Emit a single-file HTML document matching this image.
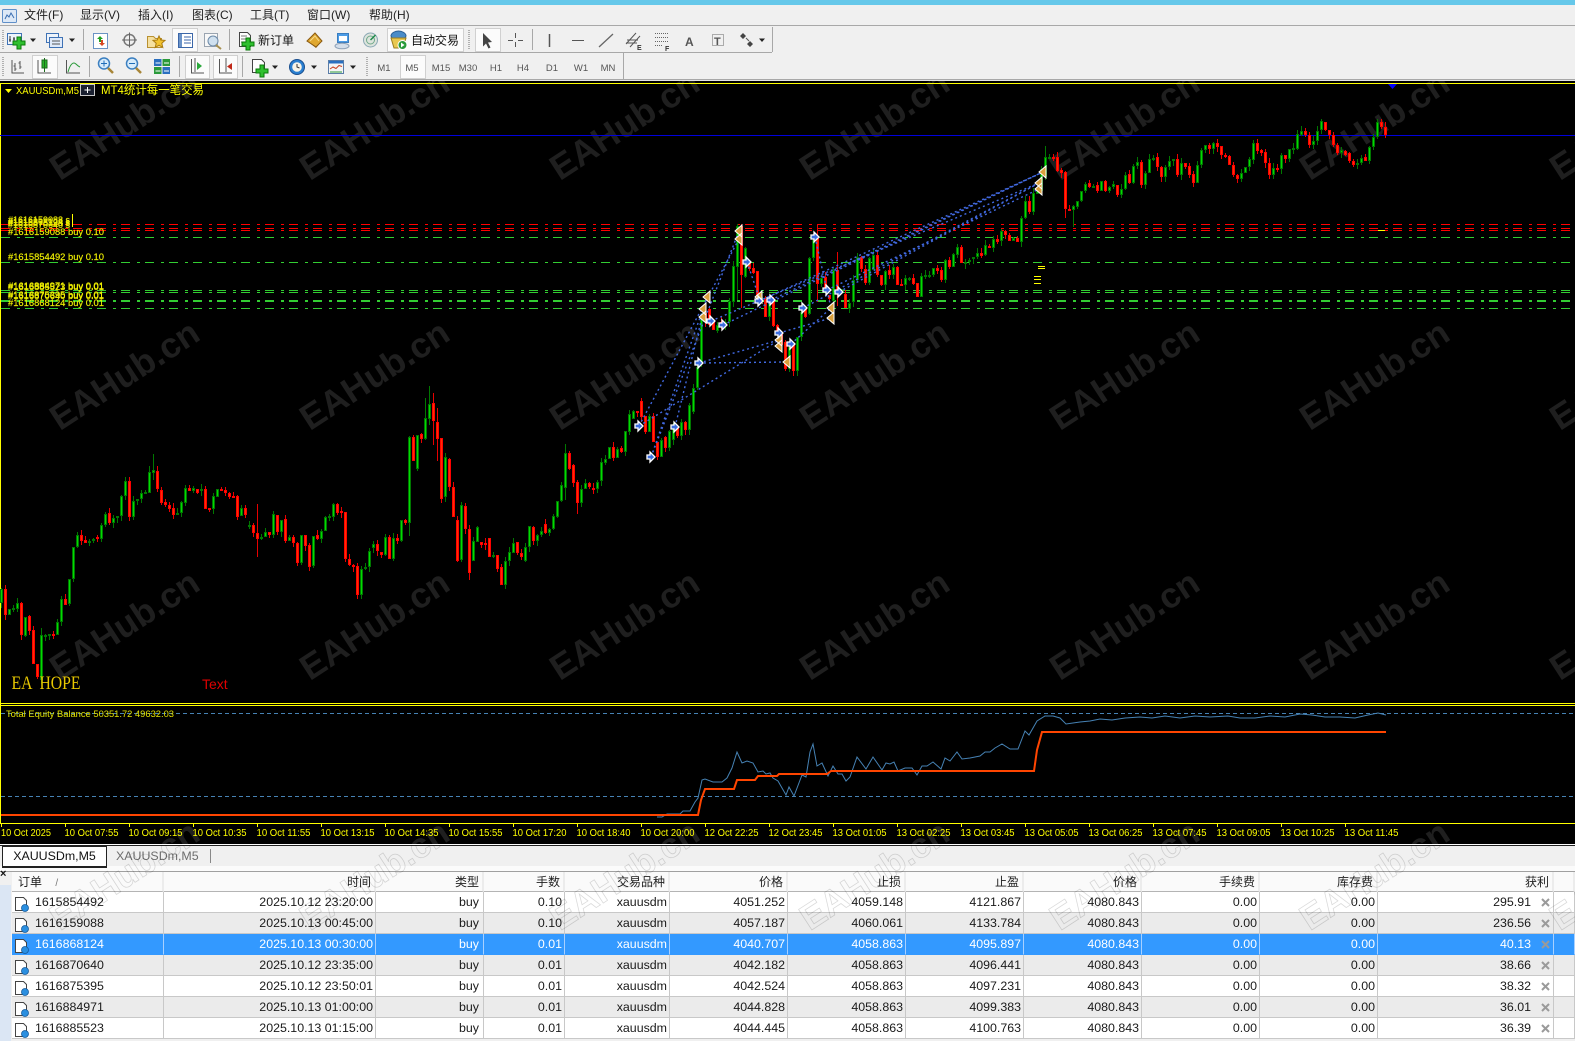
<!DOCTYPE html>
<html lang="zh"><head><meta charset="utf-8"><title>MT4</title>
<style>
html,body{margin:0;padding:0;width:1575px;height:1041px;overflow:hidden;background:#f0f0f0;font-family:"Liberation Sans","Noto Sans CJK SC",sans-serif}
svg{position:absolute;left:0;top:0;display:block}
.m{position:absolute;top:7px;font-size:12px;line-height:16px;color:#222;white-space:nowrap}
.tf{font:9.5px "Liberation Sans",sans-serif;fill:#555;text-anchor:middle}
.w{font:bold 35.5px "Liberation Sans",sans-serif;fill:#1f1f1f;text-anchor:middle}
.w2{font:bold 35.5px "Liberation Sans",sans-serif;fill:none;stroke:#000;stroke-opacity:.15;stroke-width:.8;text-anchor:middle}
.ax{font:10px "Liberation Sans",sans-serif;fill:#ffff00}
.ol{font:9.5px "Liberation Sans",sans-serif;fill:#f0f000;stroke:#f0f000;stroke-width:.15}
table{position:absolute;left:12px;top:872px;width:1563px;table-layout:fixed;border-collapse:separate;border-spacing:0;font-size:12.4px;color:#1a1a1a}
th{height:20px;box-sizing:border-box;background:#fafafa;font-weight:normal;font-size:12px;text-align:right;padding:0 3px;border-right:2px solid #ececec;border-bottom:1px solid #b4b4b4;white-space:nowrap;overflow:hidden;color:#222}
td{height:21px;box-sizing:border-box;background:#fff;text-align:right;padding:1px 2px 0;border-right:1px solid #c8c8c8;border-bottom:1px solid #c8c8c8;white-space:nowrap;overflow:hidden;line-height:19px}
tr.a td{background:#ebebeb}
tr.s td{background:#3399ff;color:#fff;border-right-color:#a8d0ff;border-bottom-color:#3399ff}
td:first-child{text-align:left;padding-left:23px}
td:nth-child(3){padding-right:4px}
td:nth-child(12){padding-right:22px}
</style></head><body>

<svg width="1575" height="845" viewBox="0 0 1575 845">
<rect x="0" y="81" width="1575" height="763" fill="#000"/>
<g>
<text class="w" transform="translate(131 135) rotate(-33)">EAHub.cn</text><text class="w" transform="translate(381 135) rotate(-33)">EAHub.cn</text><text class="w" transform="translate(631 135) rotate(-33)">EAHub.cn</text><text class="w" transform="translate(881 135) rotate(-33)">EAHub.cn</text><text class="w" transform="translate(1131 135) rotate(-33)">EAHub.cn</text><text class="w" transform="translate(1381 135) rotate(-33)">EAHub.cn</text><text class="w" transform="translate(1631 135) rotate(-33)">EAHub.cn</text>
<text class="w" transform="translate(131 385) rotate(-33)">EAHub.cn</text><text class="w" transform="translate(381 385) rotate(-33)">EAHub.cn</text><text class="w" transform="translate(631 385) rotate(-33)">EAHub.cn</text><text class="w" transform="translate(881 385) rotate(-33)">EAHub.cn</text><text class="w" transform="translate(1131 385) rotate(-33)">EAHub.cn</text><text class="w" transform="translate(1381 385) rotate(-33)">EAHub.cn</text><text class="w" transform="translate(1631 385) rotate(-33)">EAHub.cn</text>
<text class="w" transform="translate(131 635) rotate(-33)">EAHub.cn</text><text class="w" transform="translate(381 635) rotate(-33)">EAHub.cn</text><text class="w" transform="translate(631 635) rotate(-33)">EAHub.cn</text><text class="w" transform="translate(881 635) rotate(-33)">EAHub.cn</text><text class="w" transform="translate(1131 635) rotate(-33)">EAHub.cn</text><text class="w" transform="translate(1381 635) rotate(-33)">EAHub.cn</text><text class="w" transform="translate(1631 635) rotate(-33)">EAHub.cn</text>
<text class="w" transform="translate(131 885) rotate(-33)">EAHub.cn</text><text class="w" transform="translate(381 885) rotate(-33)">EAHub.cn</text><text class="w" transform="translate(631 885) rotate(-33)">EAHub.cn</text><text class="w" transform="translate(881 885) rotate(-33)">EAHub.cn</text><text class="w" transform="translate(1131 885) rotate(-33)">EAHub.cn</text><text class="w" transform="translate(1381 885) rotate(-33)">EAHub.cn</text><text class="w" transform="translate(1631 885) rotate(-33)">EAHub.cn</text>
</g>
<g shape-rendering="crispEdges">
<rect x="0" y="83" width="1575" height="1" fill="#ffff00"/>
<rect x="0" y="83" width="1" height="741" fill="#ffff00"/>
<rect x="0" y="703" width="1575" height="1" fill="#ffff00"/>
<rect x="0" y="705" width="1575" height="1" fill="#ffff00"/>
<rect x="0" y="823" width="1575" height="1" fill="#ffff00"/>
<rect x="0" y="135" width="1575" height="1" fill="#0000dc"/>
<g stroke="#ff0000" stroke-width="1" stroke-dasharray="9 7 3 5" fill="none">
<path d="M1 224.500H1575M1 228.500H1575M1 230.500H1575"/>
</g>
<g stroke="#32cd32" stroke-width="1" stroke-dasharray="9 7 3 5" fill="none">
<path d="M1 237.500H1575M1 262.500H1575M1 290.500H1575M1 292.500H1575M1 308.500H1575"/>
<path d="M1 301H1575" stroke-width="2"/>
</g>
<g fill="#ffff00">
<rect x="1378" y="230" width="7" height="1"/>
<rect x="1038" y="266" width="7" height="1"/><rect x="1038" y="268" width="7" height="1"/>
<rect x="1034" y="276" width="7" height="1"/><rect x="1034" y="279" width="7" height="1"/><rect x="1034" y="283" width="7" height="1"/>
<rect x="72" y="214" width="1" height="13"/>
</g>
<path id="gw" fill="#007800"/><path id="rw" fill="#e80000"/>
<path id="go" fill="#007800"/><path id="gi" fill="#00dc00"/>
<path id="ro" fill="#ff0000"/><path id="ri" fill="#ff3000"/>
</g>
<path d="M1388 84h9l-4.500 5z" fill="#0000ff"/>
<g stroke="#4169e1" stroke-width="1.400" stroke-dasharray="2 3" fill="none">
<path d="M639 426L739 239M651 457L739 231M675 427L707 297M651 457L703 309M639 426L779 340"/>
<path d="M699 363L787 362M699 363L779 340M747 262L759 297M815 237L831 308"/>
<path d="M711 321L1039 183M723 325L1043 172M771 300L1043 172M759 301L1043 172M803 308L1039 183M827 290L1039 189M839 292L1039 183M791 344L831 308M779 333L831 318"/>
</g>
<g fill="#daa03c" stroke="#fff" stroke-width="1">
<path d="M710 291v12l-7-6zM706 303v12l-7-6zM706 311v12l-7-6zM742 225v12l-7-6zM742 233v12l-7-6zM762 291v12l-7-6zM782 334v12l-7-6zM782 340v12l-7-6zM790 356v12l-7-6zM834 302v12l-7-6zM834 312v12l-7-6zM1046 166v12l-7-6zM1042 177v12l-7-6zM1042 183v12l-7-6z"/>
</g>
<g fill="#3c6ee0" stroke="#fff" stroke-width="1.300">
<path d="M695 361h3v-3l5 5-5 5v-3h-3zM707 319h3v-3l5 5-5 5v-3h-3zM719 323h3v-3l5 5-5 5v-3h-3zM743 260h3v-3l5 5-5 5v-3h-3zM755 299h3v-3l5 5-5 5v-3h-3zM767 298h3v-3l5 5-5 5v-3h-3zM775 331h3v-3l5 5-5 5v-3h-3zM787 342h3v-3l5 5-5 5v-3h-3zM799 306h3v-3l5 5-5 5v-3h-3zM811 235h3v-3l5 5-5 5v-3h-3zM823 288h3v-3l5 5-5 5v-3h-3zM835 290h3v-3l5 5-5 5v-3h-3zM635 424h3v-3l5 5-5 5v-3h-3zM647 455h3v-3l5 5-5 5v-3h-3zM671 425h3v-3l5 5-5 5v-3h-3z"/>
</g>
<!-- chart header -->
<path d="M5 89h7l-3.500 4z" fill="#ffff00"/>
<text x="16" y="94" font-family="Liberation Sans" font-size="10" fill="#ffff00" textLength="63" lengthAdjust="spacingAndGlyphs">XAUUSDm,M5</text>
<rect x="80.500" y="84.500" width="14" height="11" fill="#1a2030" stroke="#c8c8c8"/>
<path d="M87.500 87v6M84.500 90h6" stroke="#fff" stroke-width="1"/>
<text x="101" y="94" font-family="'Liberation Sans','Noto Sans CJK SC',sans-serif" font-size="12" fill="#ffff00" textLength="103" lengthAdjust="spacingAndGlyphs">MT4统计每一笔交易</text>
<!-- order labels -->
<text class="ol" x="8" y="223" textLength="62" lengthAdjust="spacingAndGlyphs">#1616159088 s</text>
<text class="ol" x="8" y="225" textLength="62" lengthAdjust="spacingAndGlyphs">#1616868124 s</text>
<text class="ol" x="8" y="226" textLength="62" lengthAdjust="spacingAndGlyphs">#1616875395 s</text>
<text class="ol" x="8" y="228" textLength="62" lengthAdjust="spacingAndGlyphs">#1616870640 s</text>
<text class="ol" x="8" y="235" textLength="96" lengthAdjust="spacingAndGlyphs">#1616159088 buy 0.10</text>
<text class="ol" x="8" y="260" textLength="96" lengthAdjust="spacingAndGlyphs">#1615854492 buy 0.10</text>
<text class="ol" x="8" y="289" textLength="96" lengthAdjust="spacingAndGlyphs">#1616884971 buy 0.01</text>
<text class="ol" x="8" y="290" textLength="96" lengthAdjust="spacingAndGlyphs">#1616885523 buy 0.01</text>
<text class="ol" x="8" y="298" textLength="96" lengthAdjust="spacingAndGlyphs">#1616875395 buy 0.01</text>
<text class="ol" x="8" y="299" textLength="96" lengthAdjust="spacingAndGlyphs">#1616870640 buy 0.01</text>
<text class="ol" x="8" y="306" textLength="96" lengthAdjust="spacingAndGlyphs">#1616868124 buy 0.01</text>
<text x="11.500" y="689" font-family="'Liberation Serif',serif" font-size="19" fill="#e8c800" textLength="69" lengthAdjust="spacingAndGlyphs" xml:space="preserve">EA  HOPE</text>
<text x="202" y="689" font-family="Liberation Sans" font-size="14" fill="#e00000">Text</text>
<!-- sub window -->
<g stroke="#4682b4" stroke-width="1" stroke-dasharray="4 3" fill="none" shape-rendering="crispEdges"><path d="M1 713.500H1575M1 796.500H1575"/></g>
<text x="6" y="717" font-family="Liberation Sans" font-size="9.500" fill="#e0e000" textLength="168" lengthAdjust="spacingAndGlyphs">Total Equity Balance 50351.72 49632.03</text>
<polyline fill="none" stroke="#4682b4" stroke-width="1" points="657,817 662,817 667,814 680,814 683,811 690,811 695,802 698,798 702,780 705,779 713,782 722,782 727,778 732,768 737,752 742,763 747,761 753,763 758,772 763,771 766,774 770,773 773,778 778,781 786,795 789,787 794,796 802,775 806,777 810,752 813,744 817,766 822,763 828,776 833,766 838,774 842,774 846,781 850,777 857,757 866,769 873,757 882,770 886,763 890,764 894,762 898,771 905,768 912,768 917,775 922,766 927,766 933,762 941,769 945,758 950,761 957,752 962,759 970,758 980,756 985,752 990,752 995,748 1002,744 1010,749 1018,749 1025,731 1029,735 1037,721 1045,716 1053,716 1060,718 1066,724 1080,722 1090,721 1100,719 1112,720 1125,718 1140,717 1152,718 1165,716 1180,718 1195,716 1210,717 1228,716 1240,718 1255,718 1270,716 1285,717 1300,714 1312,715 1325,717 1340,717 1355,718 1368,715 1378,713 1386,715"/>
<polyline fill="none" stroke="#ff4500" stroke-width="2" points="1,815 698,815 701,800 705,789 734,789 737,780 755,780 758,776 777,776 779,774 827,774 831,771 1034,771 1037,750 1042,732 1386,732"/>
<!-- axis -->
<g fill="#ffff00" shape-rendering="crispEdges">
<rect x="1" y="824" width="1" height="3"/><rect x="65" y="824" width="1" height="3"/><rect x="129" y="824" width="1" height="3"/><rect x="193" y="824" width="1" height="3"/><rect x="257" y="824" width="1" height="3"/><rect x="321" y="824" width="1" height="3"/><rect x="385" y="824" width="1" height="3"/><rect x="449" y="824" width="1" height="3"/><rect x="513" y="824" width="1" height="3"/><rect x="577" y="824" width="1" height="3"/><rect x="641" y="824" width="1" height="3"/><rect x="705" y="824" width="1" height="3"/><rect x="769" y="824" width="1" height="3"/><rect x="833" y="824" width="1" height="3"/><rect x="897" y="824" width="1" height="3"/><rect x="961" y="824" width="1" height="3"/><rect x="1025" y="824" width="1" height="3"/><rect x="1089" y="824" width="1" height="3"/><rect x="1153" y="824" width="1" height="3"/><rect x="1217" y="824" width="1" height="3"/><rect x="1281" y="824" width="1" height="3"/><rect x="1345" y="824" width="1" height="3"/>
</g>
<text class="ax" x="1" y="836" textLength="50" lengthAdjust="spacingAndGlyphs">10 Oct 2025</text>
<text class="ax" x="64.500" y="836" textLength="54" lengthAdjust="spacingAndGlyphs">10 Oct 07:55</text>
<text class="ax" x="128.500" y="836" textLength="54" lengthAdjust="spacingAndGlyphs">10 Oct 09:15</text>
<text class="ax" x="192.500" y="836" textLength="54" lengthAdjust="spacingAndGlyphs">10 Oct 10:35</text>
<text class="ax" x="256.500" y="836" textLength="54" lengthAdjust="spacingAndGlyphs">10 Oct 11:55</text>
<text class="ax" x="320.500" y="836" textLength="54" lengthAdjust="spacingAndGlyphs">10 Oct 13:15</text>
<text class="ax" x="384.500" y="836" textLength="54" lengthAdjust="spacingAndGlyphs">10 Oct 14:35</text>
<text class="ax" x="448.500" y="836" textLength="54" lengthAdjust="spacingAndGlyphs">10 Oct 15:55</text>
<text class="ax" x="512.500" y="836" textLength="54" lengthAdjust="spacingAndGlyphs">10 Oct 17:20</text>
<text class="ax" x="576.500" y="836" textLength="54" lengthAdjust="spacingAndGlyphs">10 Oct 18:40</text>
<text class="ax" x="640.500" y="836" textLength="54" lengthAdjust="spacingAndGlyphs">10 Oct 20:00</text>
<text class="ax" x="704.500" y="836" textLength="54" lengthAdjust="spacingAndGlyphs">12 Oct 22:25</text>
<text class="ax" x="768.500" y="836" textLength="54" lengthAdjust="spacingAndGlyphs">12 Oct 23:45</text>
<text class="ax" x="832.500" y="836" textLength="54" lengthAdjust="spacingAndGlyphs">13 Oct 01:05</text>
<text class="ax" x="896.500" y="836" textLength="54" lengthAdjust="spacingAndGlyphs">13 Oct 02:25</text>
<text class="ax" x="960.500" y="836" textLength="54" lengthAdjust="spacingAndGlyphs">13 Oct 03:45</text>
<text class="ax" x="1024.500" y="836" textLength="54" lengthAdjust="spacingAndGlyphs">13 Oct 05:05</text>
<text class="ax" x="1088.500" y="836" textLength="54" lengthAdjust="spacingAndGlyphs">13 Oct 06:25</text>
<text class="ax" x="1152.500" y="836" textLength="54" lengthAdjust="spacingAndGlyphs">13 Oct 07:45</text>
<text class="ax" x="1216.500" y="836" textLength="54" lengthAdjust="spacingAndGlyphs">13 Oct 09:05</text>
<text class="ax" x="1280.500" y="836" textLength="54" lengthAdjust="spacingAndGlyphs">13 Oct 10:25</text>
<text class="ax" x="1344.500" y="836" textLength="54" lengthAdjust="spacingAndGlyphs">13 Oct 11:45</text>
</svg>

<!-- toolbars -->
<div style="position:absolute;left:0;top:0;width:1575px;height:81px;background:#f0f0f0"></div>
<div style="position:absolute;left:0;top:0;width:1575px;height:5px;background:#66c8ea"></div>
<svg width="1575" height="81" viewBox="0 0 1575 81" style="z-index:2">
<defs>
<g id="pl"><path d="M-2-6h4v4h4v4h-4v4h-4v-4h-4v-4h4z" fill="#2fc02f" stroke="#0a7a0a" stroke-width="1"/></g>
<g id="dd"><path d="M-3-1.500h6l-3 3.500z" fill="#222"/></g>
</defs>
<g shape-rendering="crispEdges" fill="#a8a8a8">
<rect x="0" y="25" width="1575" height="1"/>
<rect x="0" y="52" width="772" height="1"/>
<rect x="772" y="27" width="1" height="25"/>
<rect x="623" y="53" width="1" height="26"/>
<rect x="0" y="79" width="1575" height="1"/>
<rect x="0" y="80" width="1575" height="1" fill="#e4e4e4"/>
<rect x="83" y="29" width="1" height="21"/><rect x="229" y="29" width="1" height="21"/><rect x="532" y="29" width="1" height="21"/>
<rect x="89" y="56" width="1" height="21"/><rect x="179" y="56" width="1" height="21"/><rect x="242" y="56" width="1" height="21"/>
</g>
<!-- grips -->
<g stroke="#b0b0b0" stroke-width="2" stroke-dasharray="1 1" fill="none"><path d="M3 30V50M3 57V77M469 30V50M367 57V77"/></g>
<!-- app icon -->
<rect x="2.500" y="9.500" width="14" height="13" rx="1" fill="#dce8f6" stroke="#5f8fc8"/><path d="M5 19l2-4 2 2 2-4 3 5" fill="none" stroke="#3a6db0"/>
<!-- pressed buttons -->
<g fill="#fbfbfb" stroke="#d0d0d0" shape-rendering="crispEdges">
<rect x="172.500" y="28.500" width="25" height="23"/>
<rect x="387.500" y="28.500" width="76" height="23"/>
<rect x="475.500" y="28.500" width="25" height="23"/>
<rect x="32.500" y="55.500" width="25" height="23"/>
<rect x="185.500" y="55.500" width="24" height="23"/>
<rect x="213.500" y="55.500" width="24" height="23"/>
<rect x="400.500" y="55.500" width="25" height="23"/>
</g>
<!-- new chart -->
<rect x="7.500" y="33.500" width="14" height="11" fill="#eef4fb" stroke="#3f72b5"/><path d="M10 36v6M9 40h2M14 37v5M13 39h2" stroke="#333" fill="none"/><use href="#pl" x="19" y="43"/><use href="#dd" x="33" y="40"/>
<!-- profiles -->
<rect x="46.500" y="33.500" width="12" height="9" fill="#eef4fb" stroke="#3f72b5"/><rect x="49.500" y="37.500" width="13" height="10" fill="#dfeafa" stroke="#3f72b5"/><path d="M52 41h8M52 44h8" stroke="#555"/><use href="#dd" x="72" y="40"/>
<!-- market watch -->
<rect x="93.500" y="33.500" width="14" height="15" fill="#fff" stroke="#6b93c4"/><path d="M100 36l3 3h-2v3h-2v-3h-2z" fill="#1fa01f"/><path d="M102 46l-3-3h2v-3h2v3h2z" fill="#d84820"/>
<!-- crosshair -->
<circle cx="129.500" cy="40" r="5.500" fill="none" stroke="#777" stroke-width="1.500"/><path d="M129.500 32.500v15M122 40h15" stroke="#666" fill="none"/>
<!-- folder star -->
<path d="M147.500 36.500h6l2 2h6v9h-14z" fill="#f5e0a0" stroke="#b89030"/><path d="M159 36l1.800 4 4.200.400-3.200 2.900 1 4.200-3.800-2.300-3.800 2.300 1-4.200-3.200-2.900 4.200-.400z" fill="#f2c330" stroke="#a97b10"/>
<!-- navigator -->
<rect x="178.500" y="33.500" width="14" height="14" fill="#fff" stroke="#3b66a8"/><rect x="179" y="34" width="3" height="13" fill="#6b93c8"/><path d="M184 37h7M184 40h7M184 43h7" stroke="#3b66a8"/>
<!-- terminal greyed -->
<rect x="204.500" y="33.500" width="13" height="13" fill="#f8f8f8" stroke="#9aa4b0"/><circle cx="213" cy="41" r="5" fill="#cfe0ef" stroke="#6d8aa8"/><path d="M216 45l5 4" stroke="#a89050" stroke-width="2"/>
<!-- new order -->
<path d="M239.500 32.500h8l3 3v11h-11z" fill="#fff" stroke="#444"/><path d="M241 36h6M241 39h7M241 42h5" stroke="#777"/><use href="#pl" x="248" y="44"/>
<text x="258" y="44.500" font-family="'Liberation Sans','Noto Sans CJK SC',sans-serif" font-size="12" fill="#111">新订单</text>
<!-- book -->
<path d="M307 41l8-8 7 8-6 6z" fill="#e0a830" stroke="#8a5a10"/><path d="M307 41l9 7 6-7-6 6z" fill="#8a5a10"/><path d="M310 41l5-5 4 5" fill="none" stroke="#f6dc8c"/>
<!-- cloud/blue -->
<rect x="337.500" y="33.500" width="11" height="9" fill="#4c9ce6" stroke="#3a7dbf"/><rect x="339" y="36" width="8" height="5" fill="#fff"/><ellipse cx="342" cy="46" rx="7" ry="2.800" fill="#d4deea" stroke="#8fa2b8"/>
<!-- radar -->
<circle cx="370.500" cy="40" r="7" fill="#dde4dd" stroke="#8aa8b4"/><circle cx="370.500" cy="40" r="4" fill="none" stroke="#6fa88a"/><path d="M370.500 40l5-5" stroke="#1e8a4a" stroke-width="1.500"/>
<!-- auto trade -->
<path d="M391 36c0-3 4-5 7.500-5s7.500 2 7.500 5l-1 2H392z" fill="#4a8cc8" stroke="#2b5f95"/><path d="M391 38h15l-3 10h-9z" fill="#e8c850" stroke="#9a7d20"/><circle cx="402.500" cy="45" r="4.500" fill="#2a9a3a" stroke="#fff"/><path d="M401 42.500l3.500 2.500-3.500 2.500z" fill="#fff"/>
<text x="411" y="44.500" font-family="'Liberation Sans','Noto Sans CJK SC',sans-serif" font-size="12" fill="#111">自动交易</text>
<!-- cursor -->
<path d="M483 33l9 9-4 .5 2.500 5-2 1-2.500-5-3 3z" fill="#444"/>
<path d="M515.500 33v5M515.500 42v5M508 40.500h5M518 40.500h5" stroke="#555" fill="none"/>
<path d="M549.500 34v13" stroke="#555" stroke-width="1.500"/>
<path d="M572 40.500h12" stroke="#555"/>
<path d="M599 47l14-13" stroke="#666" stroke-width="1.300"/>
<path d="M626 44l10-11M630 47l10-11M627 40h11M626 43h11" stroke="#555" fill="none"/>
<text x="637" y="50" font-family="Liberation Sans" font-size="7" font-weight="bold" fill="#333">E</text>
<path d="M655 33.500h13M655 37.500h13M655 41.500h13M655 45.500h8" stroke="#666" stroke-dasharray="1 1"/>
<text x="665" y="51" font-family="Liberation Sans" font-size="7" font-weight="bold" fill="#333">F</text>
<text x="685" y="46" font-family="Liberation Sans" font-size="12" font-weight="bold" fill="#555">A</text>
<rect x="712.500" y="34.500" width="11" height="11" fill="none" stroke="#666" stroke-dasharray="1 1"/>
<text x="714" y="45" font-family="Liberation Sans" font-size="11" font-weight="bold" fill="#555">T</text>
<path d="M743 33l3 3-3 3-3-3zM750 41l3 3-3 3-3-3z" fill="#444"/><path d="M746 38l3 3" stroke="#555"/>
<use href="#dd" x="762" y="40"/>
<!-- toolbar 2 -->
<g stroke="#555" fill="none"><path d="M12 60v13h12M15 63v8M13.500 66h1.500M15 69h1.500M20 61v8M18.500 63h1.500M20 67h1.500"/></g>
<g fill="none" stroke="#555"><path d="M38 60v13h13"/></g><rect x="42" y="60" width="5" height="8" fill="#28b428" stroke="#1a6b1a"/><path d="M44.500 58v14" stroke="#1a6b1a"/>
<path d="M66.500 60v13H80" stroke="#555" fill="none"/><path d="M68 72c2-7 4-9 6-9s3 3 6 4" fill="none" stroke="#2a9a3a"/>
<circle cx="104" cy="63.500" r="5.500" fill="#d6ebfb" stroke="#3b7fc0" stroke-width="1.500"/><path d="M101 63.500h6M104 60.500v6" stroke="#1e6db8"/><path d="M108 68l5 5" stroke="#a88638" stroke-width="2.500"/>
<circle cx="132" cy="63.500" r="5.500" fill="#d6ebfb" stroke="#3b7fc0" stroke-width="1.500"/><path d="M129 63.500h6" stroke="#1e6db8"/><path d="M136 68l5 5" stroke="#a88638" stroke-width="2.500"/>
<rect x="154" y="59" width="7.500" height="7" fill="#2a6fc0"/><rect x="162.500" y="59" width="7.500" height="7" fill="#2a9a3a"/><rect x="154" y="67" width="7.500" height="7" fill="#2a9a3a"/><rect x="162.500" y="67" width="7.500" height="7" fill="#2a6fc0"/><path d="M155.500 63h5M164 63h5M155.500 71h5M164 71h5" stroke="#fff"/>
<path d="M191.500 59v14H204" stroke="#555" fill="none"/><path d="M197 62l5 4-5 4z" fill="#2aa83a"/><path d="M195 58v14" stroke="#555"/>
<path d="M219.500 59v14H232" stroke="#555" fill="none"/><path d="M226 58v14" stroke="#555"/><path d="M232 63l-5 3.500 5 3.500z" fill="#c02818"/>
<path d="M252.500 59.500h9l3 3v10h-12z" fill="#fff" stroke="#444"/><use href="#pl" x="262" y="71"/><use href="#dd" x="275" y="67"/>
<circle cx="297" cy="67" r="7.500" fill="#2a7fd0" stroke="#1a4f8f"/><circle cx="297" cy="67" r="4.800" fill="#f8f4e8"/><path d="M297 64v3l2.500 1" stroke="#333" fill="none"/><use href="#dd" x="314" y="67"/>
<rect x="328.500" y="60.500" width="15" height="13" fill="#f4f4f4" stroke="#5a7da8"/><rect x="329" y="61" width="14" height="2.500" fill="#2a6fc0"/><path d="M330 69l3-2 3 1.500 3-3 3 1" stroke="#c84020" fill="none"/><path d="M330 72h12" stroke="#2a9a3a"/><use href="#dd" x="353" y="67"/>
<!-- timeframes -->
<text class="tf" x="384" y="71">M1</text><text class="tf" x="412" y="71">M5</text><text class="tf" x="441" y="71">M15</text><text class="tf" x="468" y="71">M30</text><text class="tf" x="496" y="71">H1</text><text class="tf" x="523" y="71">H4</text><text class="tf" x="552" y="71">D1</text><text class="tf" x="581" y="71">W1</text><text class="tf" x="608" y="71">MN</text>
</svg>
<div class="m" style="left:24px;z-index:3">文件(F)</div>
<div class="m" style="left:80px;z-index:3">显示(V)</div>
<div class="m" style="left:138px;z-index:3">插入(I)</div>
<div class="m" style="left:192px;z-index:3">图表(C)</div>
<div class="m" style="left:250px;z-index:3">工具(T)</div>
<div class="m" style="left:307px;z-index:3">窗口(W)</div>
<div class="m" style="left:369px;z-index:3">帮助(H)</div>

<!-- bottom panel -->
<div style="position:absolute;left:0;top:844px;width:1575px;height:197px;background:#f0f0f0;overflow:hidden">
 <div style="position:absolute;left:0;top:0;width:1575px;height:1px;background:#fff"></div>
 <div style="position:absolute;left:0;top:1px;width:1575px;height:1px;background:#222"></div>
 <div style="position:absolute;left:0;top:22px;width:1575px;height:5px;background:#fbfbfb"></div>
 <div style="position:absolute;left:0;top:27px;width:1575px;height:1px;background:#a0a0a0"></div>
 <div style="position:absolute;left:0;top:41px;width:11px;height:156px;background:#dbe6f4"></div>
 <div style="position:absolute;left:2px;top:2px;width:103px;height:19px;background:#fff;border:1px solid #222;border-bottom-width:2px;box-sizing:content-box;font:12.400px/19px 'Liberation Sans',sans-serif;color:#111;text-align:center">XAUUSDm,M5</div>
 <div style="position:absolute;left:116px;top:3px;font:12.400px/19px 'Liberation Sans',sans-serif;color:#6d6d6d">XAUUSDm,M5</div>
 <div style="position:absolute;left:210px;top:5px;width:1px;height:14px;background:#888"></div>
 <div style="position:absolute;left:0;top:24px;font:bold 11px/12px 'Liberation Sans',sans-serif;color:#111">×</div>
</div>
<table>
<colgroup><col style="width:152px"><col style="width:212px"><col style="width:108px"><col style="width:81px"><col style="width:105px"><col style="width:118px"><col style="width:118px"><col style="width:118px"><col style="width:118px"><col style="width:118px"><col style="width:118px"><col style="width:176px"><col style="width:21px"></colgroup>
<tr><th style="text-align:left;padding-left:6px">订单 &nbsp; &nbsp;<span style="color:#777;font-size:10px">/</span></th><th>时间</th><th>类型</th><th>手数</th><th>交易品种</th><th>价格</th><th>止损</th><th>止盈</th><th>价格</th><th>手续费</th><th>库存费</th><th>获利</th><th></th></tr>
<tr><td>1615854492</td><td>2025.10.12 23:20:00</td><td>buy</td><td>0.10</td><td>xauusdm</td><td>4051.252</td><td>4059.148</td><td>4121.867</td><td>4080.843</td><td>0.00</td><td>0.00</td><td>295.91</td><td></td></tr>
<tr class="a"><td>1616159088</td><td>2025.10.13 00:45:00</td><td>buy</td><td>0.10</td><td>xauusdm</td><td>4057.187</td><td>4060.061</td><td>4133.784</td><td>4080.843</td><td>0.00</td><td>0.00</td><td>236.56</td><td></td></tr>
<tr class="s"><td>1616868124</td><td>2025.10.13 00:30:00</td><td>buy</td><td>0.01</td><td>xauusdm</td><td>4040.707</td><td>4058.863</td><td>4095.897</td><td>4080.843</td><td>0.00</td><td>0.00</td><td>40.13</td><td></td></tr>
<tr class="a"><td>1616870640</td><td>2025.10.12 23:35:00</td><td>buy</td><td>0.01</td><td>xauusdm</td><td>4042.182</td><td>4058.863</td><td>4096.441</td><td>4080.843</td><td>0.00</td><td>0.00</td><td>38.66</td><td></td></tr>
<tr><td>1616875395</td><td>2025.10.12 23:50:01</td><td>buy</td><td>0.01</td><td>xauusdm</td><td>4042.524</td><td>4058.863</td><td>4097.231</td><td>4080.843</td><td>0.00</td><td>0.00</td><td>38.32</td><td></td></tr>
<tr class="a"><td>1616884971</td><td>2025.10.13 01:00:00</td><td>buy</td><td>0.01</td><td>xauusdm</td><td>4044.828</td><td>4058.863</td><td>4099.383</td><td>4080.843</td><td>0.00</td><td>0.00</td><td>36.01</td><td></td></tr>
<tr><td>1616885523</td><td>2025.10.13 01:15:00</td><td>buy</td><td>0.01</td><td>xauusdm</td><td>4044.445</td><td>4058.863</td><td>4100.763</td><td>4080.843</td><td>0.00</td><td>0.00</td><td>36.39</td><td></td></tr>
</table>
<svg width="1575" height="1041" viewBox="0 0 1575 1041" style="z-index:4;pointer-events:none">
<defs><g id="doc"><path d="M.5.5h8l3 3v10h-11z" fill="#fff" stroke="#444"/><circle cx="10" cy="11" r="3.500" fill="#2b8fe0" stroke="#155a9a" stroke-width=".8"/></g>
<g id="xx"><path d="M0 0l7 7M7 0l-7 7" stroke="#9a9a9a" stroke-width="2" fill="none"/></g>
<clipPath id="bt"><rect x="0" y="845" width="1575" height="196"/></clipPath></defs>
<use href="#doc" x="15" y="897"/><use href="#doc" x="15" y="918"/><use href="#doc" x="15" y="939"/><use href="#doc" x="15" y="960"/><use href="#doc" x="15" y="981"/><use href="#doc" x="15" y="1002"/><use href="#doc" x="15" y="1023"/>
<use href="#xx" x="1542" y="899"/><use href="#xx" x="1542" y="920"/><use href="#xx" x="1542" y="941"/><use href="#xx" x="1542" y="962"/><use href="#xx" x="1542" y="983"/><use href="#xx" x="1542" y="1004"/><use href="#xx" x="1542" y="1025"/>
<g clip-path="url(#bt)">
<text class="w2" transform="translate(131 885) rotate(-33)">EAHub.cn</text><text class="w2" transform="translate(381 885) rotate(-33)">EAHub.cn</text><text class="w2" transform="translate(631 885) rotate(-33)">EAHub.cn</text><text class="w2" transform="translate(881 885) rotate(-33)">EAHub.cn</text><text class="w2" transform="translate(1131 885) rotate(-33)">EAHub.cn</text><text class="w2" transform="translate(1381 885) rotate(-33)">EAHub.cn</text><text class="w2" transform="translate(1631 885) rotate(-33)">EAHub.cn</text>
</g>
</svg>

<script>
(function(){
var d={gw:'',rw:'',go:'',gi:'',ro:'',ri:''},n=0,s=4711;
function R(k){s=(s*1103515245+12345)&2147483647;return (s>>16)%k}
var ov={10:[628,684],37:[466,474],38:[454,480],64:[504,557],102:[436,536],106:[398,440],107:[386,425],108:[393,445],109:[408,461],117:[525,580],141:[444,500],144:[480,514],184:[224,300],185:[224,308],204:[224,302],209:[252,306],266:[171,218],268:[205,227],261:[146,180]};
function rect(x,y,w,h){return 'M'+x+' '+y+'h'+w+'v'+h+'h'+(-w)+'z'}
function add(b,str){str.split(' ').forEach(function(e){
 var g=e[0]=='g',p=e.slice(1).split(',');
 var t=Math.round(b+p[0]/3),u=Math.round(b+p[1]/3);if(u-t<2)u=t+2;
 var wt=t-R(6),wb=u+R(6);if(ov[n]){wt=ov[n][0];wb=ov[n][1]}
 var x=4*n,c=g?'g':'r';
 d[c+'w']+=rect(x+1,wt,1,wb-wt);
 d[c+'o']+=rect(x,t,3,u-t);
 if(u-t>2)d[c+'i']+=rect(x+1,t+1,1,u-t-2);
 n++;
})}
add(380,"g628,668 r628,706 g688,706 g684,688 g668,688 r668,766 g712,768 r708,752 r750,852 r852,892 g766,900 g764,767 g763,766 r762,765 g725,766 g658,725 r658,674 g596,672 g500,596 g466,500 r466,482 r480,490 g484,490 g476,484 r472,476 g434,476 g403,434 r399,428 g415,428 g408,414 g349,408 g304,349 r304,412 g364,412 g358,364 g339,358 g336,340 g276,338 g270,278 r274,328 r330,368 r366,376 r376,386 r384,404 g400,404 g366,398 g324,368 r324,334 g324,334 r328,338 g328,334 r328,386 r384,388 g348,388 g326,350 r327,332 r331,338 r340,350 r349,352 r349,410 g385,408 r384,406 g436,440 r435,460 r460,476 g470,476 g457,470 r457,464 g403,464 r406,455 g420,455 r417,484 g472,484 r472,488 r490,548 g466,550 r466,497 r496,560 g468,558 r466,476 g454,476 g412,452 g408,412");
add(380,"g372,410 r372,398 r394,398 r397,538 r538,556 r556,560 r558,646 g568,646 g562,568 g514,562 g493,503 r493,514 r516,524 g470,524 r470,538 g474,538 r475,482 g420,482 r420,430 g172,428 r172,242 g166,266 r163,176 g115,176 g72,118 r70,124 r126,178 r174,358 g232,350 r238,322 r322,410 r420,542 g376,540 r378,448 r448,578 g482,544 g442,486 r486,494 r490,494 r475,530 g525,528 r526,566 r562,616 g542,616 g517,542 g490,518 r487,520 r520,532 g502,542 g438,500 r442,484 g466,482 g454,466 r432,458 g446,460 g408,446 g362,412 g316,362 g218,324 r218,266 r256,308 r306,368 g326,368 g310,326 r310,322 r324,326 g306,328 g246,304 g238,248 g202,236 r202,234 g206,234 r205,216 g152,216 g102,156 g92,116 r92,98 r64,110 r108,156 g108,156 r108,186 r186,230");
add(0,"g1320,1371 r1311,1344 g1293,1344 g1284,1320 r1284,1308 g1266,1308 r1266,1290 g1215,1290 g1164,1236");
add(210,"g470,535 g325,460 r310,335 r298,345 r335,360 g345,362 r335,350 g335,345 g272,335 g168,275 g48,170 r48,195 g115,200 r155,178 r175,188 r184,262 g262,270 r268,320 g270,320 r270,348 r346,365 r372,405 r396,478 g410,478 r405,482 g382,482 g305,382 r295,322 g145,312 g90,145 r84,222 g205,222 r202,240 r255,268 g180,272 r180,240 g236,242 r252,295 g278,298 g210,276 g142,210");
add(130,"r382,416 r416,458 g385,458 g375,420 r375,436 r436,465 g422,465 r420,436 g412,436 r412,465 r462,466 g445,466 g444,447 r444,462 r458,500 g438,500 g436,438 g436,438 g414,436 r414,424 r420,450 g390,450 r390,410 g372,410 g350,374 r352,398 g396,400 g390,397 g382,388 g368,382 r370,378 g346,376 r348,352 g328,354 r328,336 g304,334 r304,316 r316,332 g324,332 r324,336 g265,335 g214,265 r214,245 g190,245 g182,192 g118,184 g82,142 g81,84 r81,84 r82,122 r120,128 r126,238 r238,242 g228,240 g214,230 g184,214 g162,184 r160,172 g168,172 r166,182 g154,182 r154,182 g170,182 g162,170 r164,196 g178,196 g134,178 r132,160 g108,160 g96,108 r96,164 g130,164 g88,130 g84,88 r82,112 r112,140 g112,142 g92,112 g88,92 r88,134 g100,134 r100,112 r108,134 r132,158 g104,158 g60,104 g46,60 r46,56");
add(80,"g188,206 r190,202 r198,226 r226,232 r228,256 r256,284 r286,298 g278,296 g262,278 g238,262 g190,240 r190,212 r210,218 r216,248 r248,286 g265,286 r265,270 g226,268 r226,238 g208,238 g205,208 g162,206 g154,166 r154,164 r164,196 g182,196 g152,182 g124,150 r126,150 r150,166 r166,196 r196,220 g210,220 r214,224 r220,244 r244,256 g250,254 g234,250 r232,244 g202,244 g172,202 g126,172 r126,142 r142,166");
for(var k in d)document.getElementById(k).setAttribute('d',d[k]);
})();
</script>
</body></html>
